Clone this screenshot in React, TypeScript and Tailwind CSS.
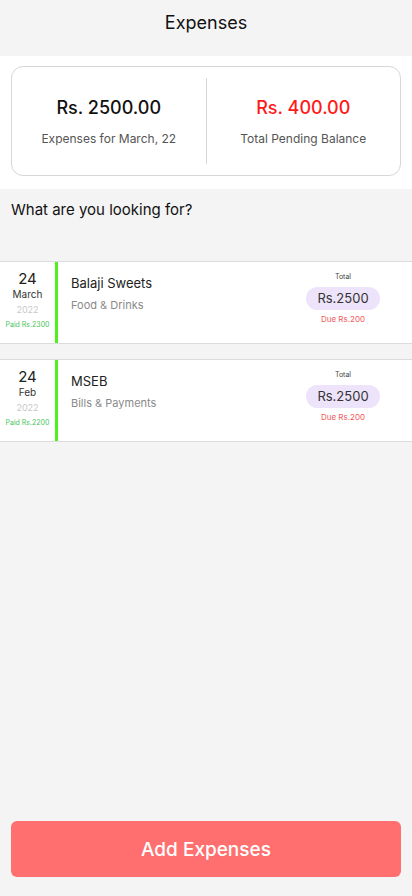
import React from 'react';

type Expense = {
  day: string;
  month: string;
  year: string;
  paid: string;
  name: string;
  category: string;
  total: string;
  due: string;
};

const expenses: Expense[] = [
  { day: '24', month: 'March', year: '2022', paid: 'Paid Rs.2300', name: 'Balaji Sweets', category: 'Food & Drinks', total: 'Rs.2500', due: 'Due Rs.200' },
  { day: '24', month: 'Feb', year: '2022', paid: 'Paid Rs.2200', name: 'MSEB', category: 'Bills & Payments', total: 'Rs.2500', due: 'Due Rs.200' },
];

const ExpenseRow: React.FC<{ item: Expense }> = ({ item }) => (
  <div className="flex h-[83px] bg-white border-y border-[#dcdcdc]">
    <div className="w-[55px] flex flex-col items-center pt-[7px]">
      <span className="text-[15px] leading-[20px] text-[#222]">{item.day}</span>
      <span className="text-[10px] leading-[12px] -mt-[1px] text-[#333]">{item.month}</span>
      <span className="text-[9px] leading-[12px] mt-[4px] text-[#c8c8c8]">{item.year}</span>
      <span className="text-[7px] leading-[10px] mt-[4px] text-[#45c45a]">{item.paid}</span>
    </div>
    <div className="w-[3px] bg-[#4cf21c]" />
    <div className="flex-1 flex flex-col pl-[13px] pt-[12px]">
      <span className="text-[13px] leading-[18px] text-[#222]">{item.name}</span>
      <span className="text-[11px] leading-[14px] mt-[6px] text-[#8a8a8a]">{item.category}</span>
    </div>
    <div className="w-[138px] flex flex-col items-center pt-[10px]">
      <span className="text-[7px] leading-[10px] text-[#444]">Total</span>
      <span className="mt-[5px] h-[23px] w-[74px] rounded-full bg-[#ede3fa] flex items-center justify-center text-[13px] text-[#333]">
        {item.total}
      </span>
      <span className="mt-[4px] text-[8px] leading-[11px] text-[#f05a5a]">{item.due}</span>
    </div>
  </div>
);

const App: React.FC = () => {
  return (
    <div
      className="h-[896px] flex flex-col bg-[#f4f4f4]"
      style={{ fontFamily: 'Inter, "Open Sans", sans-serif' }}
    >
      <header className="h-[56px] flex items-center justify-center pb-[12px]">
        <h1 className="text-[18px] text-[#111]">Expenses</h1>
      </header>

      <section className="bg-white px-[11px] pt-[10px] pb-[13px]">
        <div className="h-[110px] border border-[#d6d6d6] rounded-[12px] flex items-center">
          <div className="flex-1 flex flex-col items-center">
            <span className="text-[18px] font-medium text-[#111]">Rs. 2500.00</span>
            <span className="mt-[9px] text-[12px] text-[#555]">Expenses for March, 22</span>
          </div>
          <div className="w-[1px] h-[86px] bg-[#d6d6d6]" />
          <div className="flex-1 flex flex-col items-center">
            <span className="text-[18px] font-medium text-[#ff1a1a]">Rs. 400.00</span>
            <span className="mt-[9px] text-[12px] text-[#555]">Total Pending Balance</span>
          </div>
        </div>
      </section>

      <div className="h-[72px] px-[11px] pt-[10px]">
        <p className="text-[15px] text-[#111]">What are you looking for?</p>
      </div>

      <div className="flex flex-col gap-[15px]">
        {expenses.map((e) => (
          <ExpenseRow key={e.name} item={e} />
        ))}
      </div>

      <div className="flex-1" />

      <div className="px-[11px] pb-[19px]">
        <button className="w-full h-[56px] rounded-[6px] bg-[#ff6f6f] text-white text-[19px] font-medium pt-[2px]">
          Add Expenses
        </button>
      </div>
    </div>
  );
};

export default App;
